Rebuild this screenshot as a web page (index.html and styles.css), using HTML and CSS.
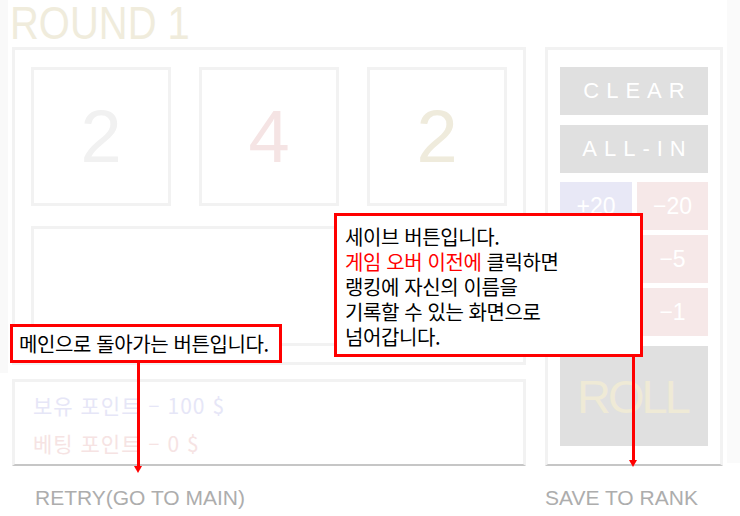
FILE: index.html
```html
<!DOCTYPE html>
<html lang="ko">
<head>
<meta charset="utf-8">
<title>Round 1</title>
<link rel="stylesheet" href="styles.css">
</head>
<body>
<div class="page">
  <h1 class="title"><span class="title-text">ROUND 1</span></h1>
  <div class="board">
    <div class="left">
      <div class="panel main">
        <div class="dice">
          <div class="die d1">2</div>
          <div class="die d2">4</div>
          <div class="die d3">2</div>
        </div>
        <div class="stage"></div>
      </div>
      <div class="panel points">
        <div class="pt own">보유 포인트 – 100 $</div>
        <div class="pt bet">베팅 포인트 – 0 $</div>
      </div>
    </div>
    <div class="panel side">
      <div class="btn wide">CLEAR</div>
      <div class="btn wide allin">ALL-IN</div>
      <div class="bets">
        <div class="btn plus">+20</div>
        <div class="btn minus">−20</div>
        <div class="btn plus">+5</div>
        <div class="btn minus">−5</div>
        <div class="btn plus">+1</div>
        <div class="btn minus">−1</div>
      </div>
      <div class="btn roll">ROLL</div>
    </div>
  </div>
  <div class="footer">
    <span class="link retry">RETRY(GO TO MAIN)</span>
    <span class="link save">SAVE TO RANK</span>
  </div>

  <div class="note note-main">메인으로 돌아가는 버튼입니다.</div>
  <div class="arrow arrow-main"></div>
  <div class="note note-save">
    <div>세이브 버튼입니다.</div>
    <div><span class="hl">게임 오버 이전에</span> 클릭하면</div>
    <div>랭킹에 자신의 이름을</div>
    <div>기록할 수 있는 화면으로</div>
    <div>넘어갑니다.</div>
  </div>
  <div class="arrow arrow-save"></div>
</div>
</body>
</html>
```

FILE: styles.css
```css
* { box-sizing: border-box; }

html, body {
  margin: 0;
  padding: 0;
}

body {
  width: 740px;
  height: 516px;
  overflow: hidden;
  background:
    linear-gradient(#f9f9f9, #f9f9f9) 0 0 / 8px 373px no-repeat,
    linear-gradient(#fafafa, #fafafa) 727px 0 / 13px 463px no-repeat,
    #ffffff;
  font-family: "Liberation Sans", Arial, sans-serif;
}

.page {
  position: relative;
  width: 740px;
  height: 516px;
}

.title {
  margin: 0;
  height: 47px;
  padding-left: 10px;
  font-size: 47px;
  line-height: 45px;
  font-weight: normal;
  color: #f0ecdc;
  white-space: nowrap;
}

.title-text {
  display: inline-block;
  transform: scaleX(0.85);
  transform-origin: left center;
}

.board {
  display: flex;
  gap: 19px;
  padding-left: 12px;
}

.left {
  display: flex;
  flex-direction: column;
  gap: 14px;
  width: 514px;
}

.panel {
  border: 3px solid #f2f2f2;
}

.main {
  height: 318px;
  padding: 17px 16px 16px;
}

.dice {
  display: flex;
  gap: 28px;
}

.die {
  width: 140px;
  height: 139px;
  border: 3px solid #f2f2f2;
  display: flex;
  align-items: center;
  justify-content: center;
  font-size: 74px;
  line-height: 1;
}

.d1 { color: #f1f1f1; }
.d2 { color: #f5e4e4; }
.d3 { color: #efebdc; }

.stage {
  margin-top: 20px;
  height: 120px;
  border: 3px solid #f2f2f2;
}

.points {
  height: 87px;
  padding: 4px 18px 0;
  border-bottom: 2px solid #c6c6c6;
  font-family: "Noto Sans CJK KR", "Noto Sans", sans-serif;
  font-size: 21px;
  line-height: 38px;
  letter-spacing: 1px;
}

.own { color: #e6e6f7; }
.bet { color: #f6e3e3; }

.side {
  width: 178px;
  height: 419px;
  padding: 17px 12px 18px;
  border-bottom: 2px solid #c6c6c6;
  display: flex;
  flex-direction: column;
}

.btn {
  display: flex;
  align-items: center;
  justify-content: center;
  color: #ffffff;
  font-size: 23px;
  line-height: 1;
}

.wide {
  height: 48px;
  background: #e0e0e0;
  margin-bottom: 10px;
  letter-spacing: 7px;
  padding-left: 7px;
  font-size: 22px;
}

.allin {
  margin-bottom: 9px;
}

.bets {
  display: grid;
  grid-template-columns: 72px 71px;
  grid-auto-rows: 48px;
  gap: 5px;
  margin-bottom: 10px;
}

.plus { background: #e8e8f6; }
.minus { background: #f6e8e8; }

.roll {
  height: 100px;
  background: #e0e0e0;
  color: #efead6;
  font-size: 47px;
  letter-spacing: -3px;
  padding-right: 3px;
}

.footer {
  display: grid;
  grid-template-columns: 514px 178px;
  column-gap: 19px;
  padding-left: 12px;
  margin-top: 20px;
  font-size: 21px;
  line-height: 24px;
  color: #adadad;
  white-space: nowrap;
}

.retry { padding-left: 23px; }

/* annotations */
.note {
  position: absolute;
  background: #ffffff;
  border: 3px solid #ff0000;
  color: #000000;
  font-family: "Noto Sans CJK KR", "Noto Sans", sans-serif;
  font-size: 20px;
  letter-spacing: -0.4px;
  white-space: nowrap;
}

.note-main {
  left: 10px;
  top: 324px;
  width: 272px;
  height: 39px;
  padding-left: 6px;
  display: flex;
  align-items: center;
}

.note-save {
  left: 334px;
  top: 213px;
  width: 309px;
  height: 144px;
  padding: 8px 8px 0;
  line-height: 25px;
}

.hl { color: #ff0000; }

.arrow {
  position: absolute;
  width: 3px;
  background: #ff0000;
}

.arrow::after {
  content: "";
  position: absolute;
  left: -3px;
  bottom: -6px;
  border-left: 4.5px solid transparent;
  border-right: 4.5px solid transparent;
  border-top: 7px solid #ff0000;
}

.arrow-main {
  left: 137px;
  top: 363px;
  height: 104px;
}

.arrow-save {
  left: 632px;
  top: 357px;
  height: 104px;
}
```
